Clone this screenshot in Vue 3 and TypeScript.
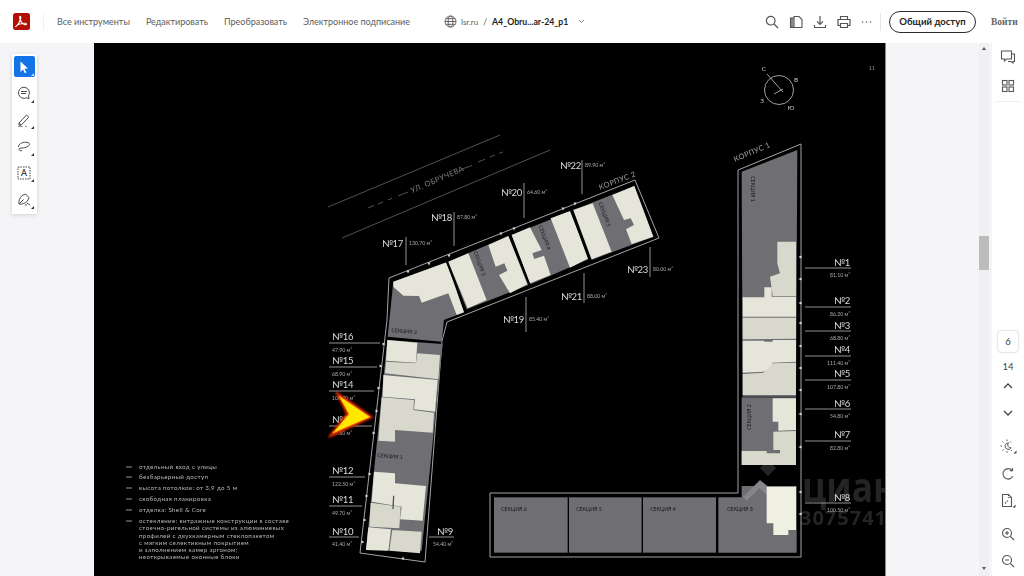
<template>
  <div class="viewer">
    <!-- top bar -->
    <header class="topbar">
      <div class="logo">
        <svg width="17" height="17" viewBox="0 0 17 17">
          <rect width="17" height="17" rx="2.5" fill="#b40f00" />
          <path d="M3 13.2c1.6-.8 3.6-4.2 4.6-7.2.4-1.400.2-2.700-.4-2.700-.8 0-.6 2.200.2 3.900.9 2 2.500 3.900 4 4.300 1 .3 2.200.1 2.200-.5 0-.8-2-.9-4.300-.5-2.500.4-5.500 1.500-6.300 2.700z" fill="none" stroke="#fff" stroke-width="1.100" />
        </svg>
      </div>
      <span class="logo-rule"></span>
      <nav class="nav">
        <a v-for="item in navItems" :key="item">{{ item }}</a>
      </nav>
      <div class="file">
        <svg class="globe" width="13" height="13" viewBox="0 0 13 13" fill="none" stroke="#555" stroke-width=".9">
          <circle cx="6.500" cy="6.500" r="5.500" />
          <ellipse cx="6.500" cy="6.500" rx="2.400" ry="5.500" />
          <path d="M1 6.500h11M1.800 3.700h9.400M1.800 9.300h9.400" />
        </svg>
        <span class="site">lsr.ru</span>
        <span class="slash">/</span>
        <span class="name">A4_Obru...ar-24_p1</span>
        <svg class="chev" width="7" height="5" viewBox="0 0 7 5" fill="none" stroke="#777" stroke-width=".9"><path d="M1 1l2.500 2.500L6 1" /></svg>
      </div>
      <div class="actions">
        <svg width="14" height="14" viewBox="0 0 14 14" fill="none" stroke="#555" stroke-width="1.200">
          <circle cx="5.700" cy="5.700" r="4.300" /><path d="M9 9l4 4" />
        </svg>
        <svg width="14" height="14" viewBox="0 0 14 14" fill="none" stroke="#555" stroke-width="1.100">
          <path d="M5 1.500h5l3 3v8H5z" /><path d="M5 3H1.500v9.500H5" fill="#888" />
        </svg>
        <svg width="14" height="14" viewBox="0 0 14 14" fill="none" stroke="#555" stroke-width="1.200">
          <path d="M7 1v8M4 6.300L7 9.300l3-3M1.500 10v2.500h11V10" />
        </svg>
        <svg width="14" height="14" viewBox="0 0 14 14" fill="none" stroke="#555" stroke-width="1.200">
          <path d="M3.500 4V1.500h7V4M3.500 10.500H1V4.500h12v6h-2.500" /><path d="M3.500 8.500h7v4h-7z" />
        </svg>
        <svg width="11" height="14" viewBox="0 0 11 14" fill="#666">
          <circle cx="1.500" cy="7" r=".8" /><circle cx="5.500" cy="7" r=".8" /><circle cx="9.500" cy="7" r=".8" />
        </svg>
        <span class="divider"></span>
      </div>
      <button class="share">Общий доступ</button>
      <span class="login">Войти</span>
    </header>

    <main class="workspace">
      <!-- left tools -->
      <aside class="leftrail">
        <div class="tools">
          <div v-for="(tool, i) in tools" :key="tool" :class="['tool', { active: i === 0 }]">
            <svg width="16" height="16" viewBox="0 0 16 16" fill="none" stroke="#4b4b4b" stroke-width="1">
              <path v-if="tool === 'cursor'" d="M4.500 2.500l7.500 7-3.500.3 2 3.700-1.700.8-1.800-3.700-2.500 2.300z" fill="#fff" stroke="none" />
              <g v-else-if="tool === 'comment'">
                <path d="M8 2.200a5.600 5.600 0 1 0 2.600 10.600l2.500.8-.6-2.700A5.600 5.600 0 0 0 8 2.200z" />
                <path d="M5 6.500h6M5 8.500h5" />
              </g>
              <g v-else-if="tool === 'pen'">
                <path d="M3 11l7.500-8 2.300 2.200-7.800 8H3z" />
                <path d="M2 14.500h5M9 14.500h2" stroke="#999" />
                <path d="M3 11l2 2.200" />
              </g>
              <path v-else-if="tool === 'lasso'" d="M2.500 9c0-3 3.500-4.800 7-4.800 2.300 0 4 .8 4 2 0 2-4 3.800-7.500 3.800-1.200 0-3 .2-3 1.300 0 1 1.500 1.500 3 1.500" />
              <g v-else-if="tool === 'text'">
                <rect x="2" y="2" width="12" height="12" stroke-dasharray="1.500 1" />
                <text x="8" y="11.300" text-anchor="middle" class="tool-a">A</text>
              </g>
              <g v-else>
                <path d="M3 13c-.5-3 .5-6 3-8.500l3.500-1.500 3.500 3.500-1.500 3.500C9 12.500 6 13.500 3 13z" />
                <path d="M3 13l4.500-4.500M11 12l3 2M9 14h2" />
              </g>
            </svg>
            <i class="corner"></i>
          </div>
        </div>
      </aside>

      <!-- the drawing page -->
      <section class="page">
        <svg class="plan" width="791" height="533" viewBox="94 43 791 533">
          <defs>
            <filter id="glow" x="-30%" y="-30%" width="160%" height="160%">
              <feGaussianBlur stdDeviation=".8" />
            </filter>
          </defs>

          <!-- street -->
          <g class="line">
            <path d="M328 207L500 135M342 238L550 150" />
            <path d="M368 208l6-2.500M378 204l5-2M388 200l4-1.700M478 162l7-2.800M490 157l5-2M499 153.500l4-1.600" />
            <path d="M398 196l10-4M462 169l10-3.500" />
          </g>

          <!-- watermark under the plan -->
          <g class="wm">
            <polygon points="760,468 768,460 776,468 768,476" />
            <text class="wm-big" transform="translate(802 502) scale(.84 1)">циан</text>
            <text class="wm-num" x="800" y="525">3075741</text>
          </g>

          <!-- building 2, bent wing -->
          <path class="outline" d="M389 278L635 180L659 238L447 322L442 341L425 562L360 553L387 320z" />
          <g transform="translate(320 150) scale(.33333)">
            <polygon class="grey" points="220,395 380,337 432,487 372,510 365,575 203,560" />
            <polygon class="cream" points="220,395 380,337 432,487 410,495 385,430 305,458 297,438 250,437 220,410" />
            <polygon class="grey" points="385,335 565,258 625,405 440,478" />
            <polygon class="cream" points="385,335 445,310 500,450 443,475" />
            <polygon class="cream" points="505,285 565,258 622,403 570,430 537,375 562,362 553,340 527,350" />
            <polygon class="grey" points="575,255 750,185 805,328 632,403" />
            <polygon class="cream" points="575,255 630,232 665,300 637,310 643,327 672,317 692,375 630,400" />
            <polygon class="cream" points="692,205 750,183 806,325 750,353" />
            <polygon class="grey" points="760,180 943,108 1000,260 815,330" />
            <polygon class="cream" points="760,180 818,160 875,305 815,328" />
            <polygon class="cream" points="877,135 943,108 1000,260 935,282 918,238 942,225 932,205 912,210" />
            <path class="cut" d="M380 335L437 480M570 255L628 405M755 185L808 330" />
          </g>
          <g transform="translate(110 320) scale(.33333)">
            <polygon class="grey" points="832,60 998,72 935,692 768,690" />
            <polygon class="cream" points="832,60 922,68 918,128 828,122" />
            <polygon class="cream2" points="828,125 918,130 922,100 990,105 985,178 825,160" />
            <polygon class="cream" points="820,165 983,180 975,275 912,268 915,238 818,230" />
            <polygon class="cream2" points="815,232 912,240 910,270 972,278 968,338 855,330 855,365 805,362" />
            <polygon class="cream" points="792,455 855,460 855,490 948,498 938,602 870,598 875,560 785,545" />
            <polygon class="cream2" points="782,548 872,560 868,625 778,620" />
            <polygon class="cream" points="775,622 843,628 835,692 768,690" />
            <polygon class="cream2" points="847,630 935,635 930,700 838,692" />
            <path class="hair" d="M851 527L849 567" />
          </g>

          <!-- building 1 -->
          <path class="outline" d="M738 170L801 144V557H490V493H738z" />
          <g transform="translate(720 50) scale(.33333)">
            <polygon class="grey" points="65,365 232,300 228,1040 68,1040" />
            <polygon class="cream2" points="172,575 228,575 228,738 158,738 150,680 180,670 172,640" />
            <polygon class="cream" points="68,742 133,742 133,712 155,712 155,740 228,740 228,800 68,800" />
            <polygon class="cream2" points="68,803 228,803 228,866 68,868" />
            <polygon class="cream" points="68,872 133,872 133,875 158,875 158,870 228,870 228,935 158,938 155,958 130,965 68,968" />
            <polygon class="cream2" points="68,972 130,968 160,940 228,938 228,1035 68,1035" />
          </g>
          <g transform="translate(480 380) scale(.33333)">
            <rect class="grey" x="785" y="52" width="163" height="203" />
            <polygon class="cream" points="878,55 948,55 948,150 895,152 895,125 878,125" />
            <polygon class="cream2" points="880,155 948,153 948,255 785,255 785,213 860,213 860,220 900,220 900,210 880,210" />
            <polygon class="grey" points="715,352 785,352 785,318 950,318 950,518 715,518" />
            <polygon class="roof" points="790,350 840,300 862,318 862,345 838,325 800,362" />
            <polygon class="cream3" points="860,320 948,320 948,450 925,450 925,465 880,465 880,430 860,430" />
            <rect class="grey" x="42" y="352" width="221" height="166" />
            <rect class="grey" x="267" y="352" width="218" height="166" />
            <rect class="grey" x="489" y="352" width="219" height="166" />
          </g>

          <!-- section captions -->
          <text v-for="s in sections" :key="s.x + '-' + s.y" class="section" text-anchor="middle"
            :transform="`translate(${s.x} ${s.y}) rotate(${s.r})`">{{ s.t }}</text>

          <text class="wing" transform="translate(600 190) rotate(-21)">КОРПУС 2</text>
          <text class="wing" transform="translate(735 162) rotate(-23)">КОРПУС 1</text>
          <text class="street" transform="translate(412 193) rotate(-23)">УЛ. ОБРУЧЕВА</text>

          <!-- entrances -->
          <polygon v-for="t in entrances" :key="t" class="entry" :points="t" />

          <!-- unit callouts -->
          <g v-for="u in units" :key="u.n">
            <path class="leader" :d="u.line" />
            <text class="num" :x="u.x" :y="u.y + 3.500" :text-anchor="u.anchor">№{{ u.n }}</text>
            <text class="area" :x="u.ax" :y="u.ay + 2" :text-anchor="u.areaAnchor">{{ u.area }} м²</text>
          </g>

          <!-- legend -->
          <g v-for="row in legend" :key="row.y">
            <path v-if="row.dash" class="dash" :d="`M126 ${row.y}h6`" />
            <text class="legend" x="139" :y="row.y + 2">{{ row.t }}</text>
          </g>

          <!-- compass -->
          <g class="compass">
            <circle cx="779" cy="90" r="14.500" />
            <path d="M767 74L783 92M774 94L783 89" />
          </g>
          <text class="mark" x="764" y="71" text-anchor="middle">С</text>
          <text class="mark" x="796" y="82" text-anchor="middle">В</text>
          <text class="mark" x="762" y="103" text-anchor="middle">З</text>
          <text class="mark" x="791" y="110" text-anchor="middle">Ю</text>
          <text class="pageno" x="872" y="70" text-anchor="middle">11</text>

          <!-- laser pointer -->
          <polygon points="372,417 336,392 347,414 329,437" fill="#e82a00" stroke="#e82a00" stroke-width="1.500" filter="url(#glow)" />
          <polygon points="370,417 339,396 349,414 333,433" fill="#ffe800" stroke="#ff9a00" stroke-width=".8" />
        </svg>
      </section>

      <!-- scrollbar -->
      <div class="gutter">
        <div class="track">
          <i class="up"></i>
          <div class="thumb"></div>
          <i class="down"></i>
        </div>
      </div>

      <!-- right rail -->
      <aside class="rightrail">
        <svg width="16" height="16" viewBox="0 0 16 16" fill="none" stroke="#555" stroke-width="1.100">
          <path d="M1.500 2h10v8H6.500l-2 2v-2h-3z" /><path d="M11.500 5h3v7.500h-1.500v1.500l-2-1.500H8" />
        </svg>
        <svg class="grid" width="14" height="14" viewBox="0 0 14 14" fill="none" stroke="#555" stroke-width="1.100">
          <rect x="1.500" y="1.500" width="4.500" height="4.500" /><rect x="8" y="1.500" width="4.500" height="4.500" />
          <rect x="1.500" y="8" width="4.500" height="4.500" /><rect x="8" y="8" width="4.500" height="4.500" />
        </svg>
        <div class="rule"></div>

        <div class="pager">
          <div class="current">6</div>
          <div class="total">14</div>
          <svg width="12" height="8" viewBox="0 0 12 8" fill="none" stroke="#444" stroke-width="1.300"><path d="M2 6l4-4 4 4" /></svg>
          <svg class="next" width="12" height="8" viewBox="0 0 12 8" fill="none" stroke="#444" stroke-width="1.300"><path d="M2 2l4 4 4-4" /></svg>
          <svg class="sun" width="18" height="16" viewBox="0 0 18 16" fill="none" stroke="#555" stroke-width="1">
            <path d="M9.500 4.800a3.300 3.300 0 1 0 2.700 5 3 3 0 0 1-2.700-5z" />
            <path d="M8 1.500v1.500M8 13v1.500M1.500 8H3M3.500 3.500l1 1M3.500 12.500l1-1M12 3.500l-1 1M12 12l1 1" />
            <path d="M17.500 12.500v3h-3z" fill="#444" stroke="none" />
          </svg>
          <svg class="rotate" width="14" height="14" viewBox="0 0 14 14" fill="none" stroke="#555" stroke-width="1.100">
            <path d="M11.800 9.300A5.200 5.200 0 1 1 11 3.300M11.500 1v2.800H8.700" />
          </svg>
          <svg class="doc" width="16" height="15" viewBox="0 0 16 15" fill="none" stroke="#555" stroke-width="1.100">
            <path d="M2.500 1.500h6l3 3v9h-9z" /><path d="M8.500 1.500v3h3M5 10.500l3-3" stroke-dasharray="1.500 1" />
            <path d="M15.500 11.500v3h-3z" fill="#444" stroke="none" />
          </svg>
          <svg class="zoom-in" width="14" height="14" viewBox="0 0 14 14" fill="none" stroke="#555" stroke-width="1.100">
            <circle cx="6" cy="6" r="4.500" /><path d="M9.300 9.300L13 13M4 6h4M6 4v4" />
          </svg>
          <svg class="zoom-out" width="14" height="14" viewBox="0 0 14 14" fill="none" stroke="#555" stroke-width="1.100">
            <circle cx="6" cy="6" r="4.500" /><path d="M9.300 9.300L13 13M4 6h4" />
          </svg>
        </div>
      </aside>
    </main>
  </div>
</template>

<script setup lang="ts">
type Anchor = 'start' | 'end'

interface Unit {
  n: number
  area: string
  x: number
  y: number
  ax: number
  ay: number
  anchor: Anchor
  areaAnchor: Anchor
  line: string
}

const navItems = ['Все инструменты', 'Редактировать', 'Преобразовать', 'Электронное подписание']
const tools = ['cursor', 'comment', 'pen', 'lasso', 'text', 'sign']

// wing of building 2: number left of a vertical leader, area right of it
const top = (n: number, area: string, x: number, y: number, lx: number, y1: number, y2: number): Unit => ({
  n, area, x, y, ax: lx + 3, ay: y, anchor: 'end', areaAnchor: 'start', line: `M${lx} ${y1}V${y2}`,
})
// left column: horizontal leader, number above, area below
const left = (n: number, area: string, y: number, ly: number, x2: number): Unit => ({
  n, area, x: 332, y, ax: 332, ay: ly + 6.500, anchor: 'start', areaAnchor: 'start', line: `M329 ${ly}H${x2}`,
})
// right column of building 1
const right = (n: number, area: string, y: number, ly: number): Unit => ({
  n, area, x: 850, y, ax: 850, ay: ly + 6.500, anchor: 'end', areaAnchor: 'end', line: `M805 ${ly}H851`,
})

const units: Unit[] = [
  right(1, '81.10', 262, 268),
  right(2, '86.20', 300, 307),
  right(3, '68.80', 325, 331),
  right(4, '111.40', 349, 356),
  right(5, '107.80', 373, 380),
  right(6, '54.80', 403, 409),
  right(7, '82.80', 434, 441),
  right(8, '100.50', 497, 503),
  { n: 9, area: '54.40', x: 453, y: 531, ax: 453, ay: 544, anchor: 'end', areaAnchor: 'end', line: 'M429 537H454' },
  left(10, '41.40', 531, 537, 359),
  left(11, '49.70', 499, 506, 362),
  left(12, '122.50', 470, 477, 365),
  left(13, '97.60', 419, 426, 372),
  left(14, '106.70', 384, 391, 374),
  left(15, '68.90', 360, 367, 377),
  left(16, '47.90', 336, 343, 380),
  top(17, '130.70', 403, 243, 406, 237, 265),
  top(18, '87.80', 452, 217, 454, 212, 246),
  top(19, '85.40', 524, 319, 526, 297, 332),
  top(20, '64.60', 522, 192, 524, 183, 218),
  top(21, '88.00', 582, 296, 584, 273, 303),
  top(22, '89.90', 581, 165, 582, 160, 194),
  top(23, '80.00', 648, 269, 650, 247, 277),
]

const sections = [
  { t: 'СЕКЦИЯ 1', x: 390, y: 458, r: 5 },
  { t: 'СЕКЦИЯ 2', x: 404, y: 333, r: 5 },
  { t: 'СЕКЦИЯ 3', x: 478, y: 264, r: 70 },
  { t: 'СЕКЦИЯ 4', x: 543, y: 238, r: 70 },
  { t: 'СЕКЦИЯ 5', x: 603, y: 215, r: 70 },
  { t: 'СЕКЦИЯ 1', x: 751, y: 189, r: 90 },
  { t: 'СЕКЦИЯ 2', x: 751, y: 417, r: -90 },
  { t: 'СЕКЦИЯ 6', x: 514, y: 511, r: 0 },
  { t: 'СЕКЦИЯ 5', x: 589, y: 511, r: 0 },
  { t: 'СЕКЦИЯ 4', x: 663, y: 511, r: 0 },
  { t: 'СЕКЦИЯ 3', x: 740, y: 511, r: 0 },
]

const legend = [
  { t: 'отдельный вход с улицы', y: 467, dash: true },
  { t: 'безбарьерный доступ', y: 477, dash: true },
  { t: 'высота потолков: от 3,9 до 5 м', y: 488, dash: true },
  { t: 'свободная планировка', y: 499, dash: true },
  { t: 'отделка: Shell & Core', y: 510, dash: true },
  { t: 'остекление: витражные конструкции в составе', y: 521, dash: true },
  { t: 'стоечно-ригельной системы из алюминиевых', y: 528, dash: false },
  { t: 'профилей с двухкамерным стеклопакетом', y: 536, dash: false },
  { t: 'с мягким селективным покрытием', y: 543, dash: false },
  { t: 'и заполнением камер аргоном;', y: 550, dash: false },
  { t: 'неоткрываемые оконные блоки', y: 557, dash: false },
]

const tri = (x: number, y: number, dir: 'r' | 'l' | 'd' | 'u'): string => {
  if (dir === 'r') return `${x - 1.5},${y - 1.5} ${x + 1.5},${y} ${x - 1.5},${y + 1.5}`
  if (dir === 'l') return `${x + 1.5},${y - 1.5} ${x - 1.5},${y} ${x + 1.5},${y + 1.5}`
  if (dir === 'd') return `${x - 1.5},${y - 1.5} ${x + 1.5},${y - 1.5} ${x},${y + 1.5}`
  return `${x - 1.5},${y + 1.5} ${x + 1.5},${y + 1.5} ${x},${y - 1.5}`
}

const entrances: string[] = [
  ...[[408, 272], [429, 264], [449, 256], [501, 234], [514, 229], [563, 209], [575, 204]].map(([x, y]) => tri(x, y, 'd')),
  ...[[384, 344], [381, 366], [379, 388], [377, 411], [374, 433], [370, 474], [367, 496], [365, 520], [363, 542]].map(([x, y]) => tri(x, y, 'r')),
  tri(403, 558, 'u'),
  ...[257, 279, 303, 323, 346, 368, 390, 414, 447, 492, 514].map((y) => tri(800, y, 'l')),
]
</script>

<style scoped>
.viewer {
  width: 1024px;
  height: 576px;
  display: flex;
  flex-direction: column;
  overflow: hidden;
  font-family: Lato, "Open Sans", sans-serif;
  background: #f5f4f6;
}

.topbar {
  height: 43px;
  flex: none;
  display: flex;
  align-items: center;
  background: #fff;
  color: #5c5c5c;
  white-space: nowrap;
}

.logo {
  width: 30px;
  padding-left: 13px;
  display: flex;
  flex: none;
  box-sizing: content-box;
}

.logo-rule {
  width: 1px;
  height: 16px;
  background: #f0f0f0;
  flex: none;
}

.nav {
  display: flex;
  gap: 16px;
  font-size: 9px;
  width: 400px;
  flex: none;
  padding-left: 13px;
  box-sizing: border-box;
}

.file {
  display: flex;
  align-items: center;
  width: 321px;
  flex: none;
  font-size: 8.500px;
}

.site {
  margin-left: 4px;
  font-size: 8px;
}

.slash {
  margin: 0 5px;
}

.name {
  color: #222;
  font-weight: 700;
  font-size: 8.700px;
}

.chev {
  margin-left: 10px;
}

.actions {
  display: flex;
  align-items: center;
  gap: 10px;
  width: 124px;
  flex: none;
}

.divider {
  width: 1px;
  height: 18px;
  background: #e6e6e6;
  margin-left: -2px;
}

.share {
  width: 87px;
  height: 22px;
  flex: none;
  border: 1.500px solid #2c2c2c;
  border-radius: 11px;
  background: #fff;
  color: #222;
  font-family: inherit;
  font-size: 9.500px;
  font-weight: 700;
  padding: 0;
}

.login {
  margin-left: 15px;
  font-family: "Liberation Serif", serif;
  font-size: 9.500px;
  font-weight: 700;
  color: #666;
}

.workspace {
  flex: 1;
  display: flex;
  min-height: 0;
}

.leftrail {
  width: 94px;
  flex: none;
  padding: 11px 0 0 12px;
  box-sizing: border-box;
}

.tools {
  width: 25px;
  height: 160px;
  box-sizing: border-box;
  padding: 2px 1.500px;
  background: #fff;
  box-shadow: 0 1px 4px rgba(0, 0, 0, 0.15);
  display: flex;
  flex-direction: column;
  gap: 5.500px;
}

.tool {
  width: 21px;
  height: 21px;
  border-radius: 2px;
  position: relative;
  display: flex;
  align-items: center;
  justify-content: center;
}

.tool.active {
  background: #1473e6;
}

.corner {
  position: absolute;
  right: 1px;
  bottom: 1px;
  border-left: 3px solid transparent;
  border-bottom: 3px solid #333;
}

.tool.active .corner {
  border-bottom-color: #cfe2fb;
}

.tool-a {
  font-size: 8.500px;
  font-weight: 700;
  fill: #444;
  stroke: none;
}

.page {
  width: 791px;
  flex: none;
  background: #000;
  box-shadow: 1px 0 0 #888;
}

.plan {
  display: block;
  font-family: Lato, "Liberation Sans", sans-serif;
  will-change: transform;
}

.line path {
  fill: none;
  stroke: #8a8a8a;
  stroke-width: 0.600;
}

.outline {
  fill: none;
  stroke: #a4a4a4;
  stroke-width: 1;
}

.grey {
  fill: #6e6e73;
}

.roof {
  fill: #85858a;
}

.cream {
  fill: #e5e5da;
}

.cream2 {
  fill: #d8d8cc;
}

.cream3 {
  fill: #efefe2;
}

.cut {
  fill: none;
  stroke: #050505;
  stroke-width: 5;
}

.hair {
  stroke: #555;
  stroke-width: 4;
}

.section {
  font-size: 5.200px;
  fill: #1a1a1a;
}

.wing {
  font-size: 7.500px;
  fill: #a0a0a0;
  letter-spacing: 0.300px;
}

.street {
  font-size: 7.500px;
  fill: #808080;
  letter-spacing: 0.400px;
}

.entry {
  fill: #ddd;
}

.leader {
  stroke: #b8b8b8;
  stroke-width: 0.800;
  fill: none;
}

.num {
  font-size: 9.500px;
  letter-spacing: -0.300px;
  fill: #dcdcdc;
}

.area {
  font-size: 5.200px;
  fill: #aaa;
}

.dash {
  stroke: #bbb;
  stroke-width: 0.800;
}

.legend {
  font-size: 6.200px;
  fill: #b8b8b8;
  letter-spacing: 0.350px;
}

.compass {
  fill: none;
  stroke: #c8c8c8;
  stroke-width: 0.800;
}

.mark {
  font-size: 6.500px;
  fill: #c8c8c8;
}

.pageno {
  font-size: 5px;
  fill: #999;
}

.wm {
  fill: #242424;
}

.wm-big {
  font-family: "Open Sans", sans-serif;
  font-size: 42px;
  font-weight: 700;
}

.wm-num {
  font-family: "Open Sans", sans-serif;
  font-size: 20px;
  font-weight: 700;
  letter-spacing: 1px;
}

.gutter {
  flex: 1;
  padding-left: 94px;
  box-sizing: border-box;
}

.track {
  width: 10px;
  height: 100%;
  background: #f0f0f2;
  padding-top: 193px;
  box-sizing: border-box;
  position: relative;
}

.thumb {
  height: 34px;
  background: #bcbcbc;
}

.up,
.down {
  position: absolute;
  left: 3px;
  border-left: 2px solid transparent;
  border-right: 2px solid transparent;
}

.up {
  top: 4px;
  border-bottom: 3px solid #555;
}

.down {
  bottom: 6px;
  border-top: 3px solid #555;
}

.rightrail {
  width: 32px;
  flex: none;
  background: #fff;
  display: flex;
  flex-direction: column;
  align-items: center;
  padding-top: 6px;
  box-sizing: border-box;
}

.grid {
  margin-top: 14px;
}

.rule {
  width: 26px;
  height: 1px;
  background: #f0f0f0;
  margin-top: 8px;
}

.pager {
  margin-top: auto;
  margin-bottom: 8px;
  display: flex;
  flex-direction: column;
  align-items: center;
}

.current {
  width: 20px;
  height: 21px;
  line-height: 21px;
  text-align: center;
  font-size: 9.500px;
  color: #444;
  border-radius: 3px;
  box-shadow: 0 0 2px rgba(0, 0, 0, 0.35);
}

.total {
  font-size: 9.500px;
  color: #444;
  margin: 9px 0 9px;
  line-height: 12px;
}

.next {
  margin-top: 19px;
}

.sun {
  margin-top: 21px;
}

.rotate {
  margin-top: 13px;
}

.doc {
  margin-top: 12px;
}

.zoom-in {
  margin-top: 19px;
}

.zoom-out {
  margin-top: 13px;
}
</style>

<style>
html,
body {
  margin: 0;
  overflow: hidden;
}
</style>
